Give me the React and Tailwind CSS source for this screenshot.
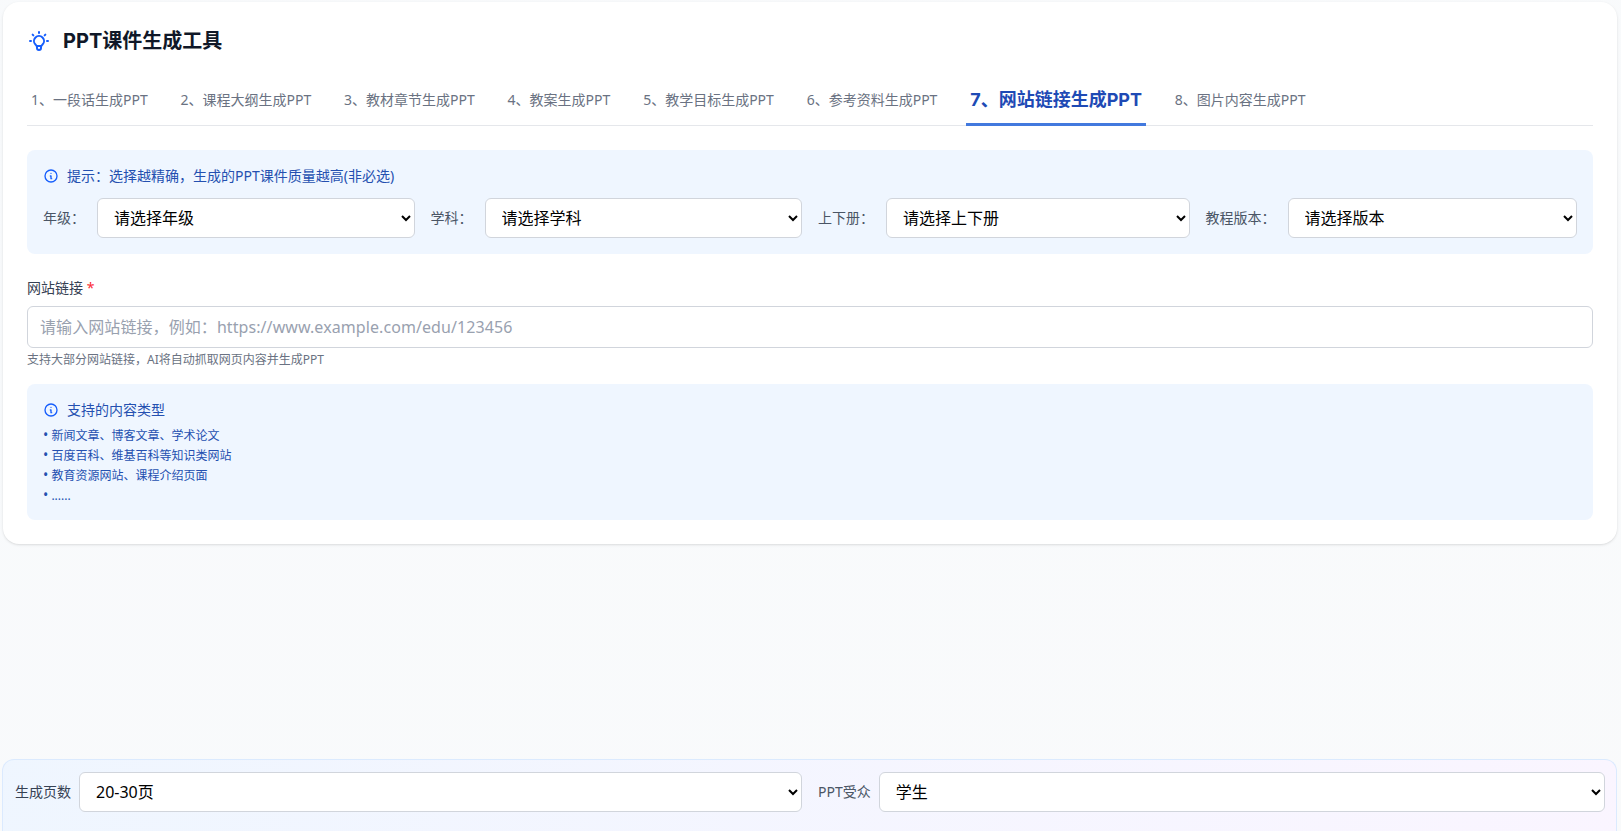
const FONT = "font-['Noto_Sans','Noto_Sans_CJK_SC',sans-serif]";
const BOLD = "font-['Inter','Noto_Sans_CJK_SC',sans-serif]";

function InfoIcon() {
  return (
    <svg className="h-4 w-4 shrink-0 text-blue-600" fill="none" viewBox="0 0 24 24" stroke="currentColor" strokeWidth="2" strokeLinecap="round" strokeLinejoin="round">
      <path d="M13 16h-1v-4h-1m1-4h.01M21 12a9 9 0 11-18 0 9 9 0 0118 0z" />
    </svg>
  );
}

function BulbIcon() {
  return (
    <svg className="h-6 w-6 shrink-0 text-blue-600" fill="none" viewBox="0 0 24 24" stroke="currentColor" strokeWidth="2" strokeLinecap="round" strokeLinejoin="round">
      <path d="M9.663 17h4.673M12 3v1m6.364 1.636l-.707.707M21 12h-1M4 12H3m3.343-5.657l-.707-.707m2.828 9.9a5 5 0 117.072 0l-.548.547A3.374 3.374 0 0014 18.469V19a2 2 0 11-4 0v-.531c0-.895-.356-1.754-.988-2.386l-.548-.547z" />
    </svg>
  );
}

const tabs = [
  "1、一段话生成PPT",
  "2、课程大纲生成PPT",
  "3、教材章节生成PPT",
  "4、教案生成PPT",
  "5、教学目标生成PPT",
  "6、参考资料生成PPT",
  "7、网站链接生成PPT",
  "8、图片内容生成PPT",
];

const filters = [
  ["年级：", "请选择年级"],
  ["学科：", "请选择学科"],
  ["上下册：", "请选择上下册"],
  ["教程版本：", "请选择版本"],
];

const items = ["新闻文章、博客文章、学术论文", "百度百科、维基百科等知识类网站", "教育资源网站、课程介绍页面", "......"];

function Select({ value }) {
  return (
    <select defaultValue={value} className="h-10 min-w-0 flex-1 rounded-md border border-gray-300 bg-white px-3 text-base text-black">
      <option>{value}</option>
    </select>
  );
}

export default function App() {
  return (
    <div className={`${FONT} flex h-[831px] flex-col overflow-hidden bg-gradient-to-br from-slate-50 to-gray-50 pt-[2px] pr-1 pl-[3px]`}>
      <main className="flex-1">
        <div className="rounded-2xl bg-white p-6 shadow-sm">
          <div className="flex h-[30px] items-center gap-3">
            <BulbIcon />
            <h1 className={`${BOLD} text-xl font-bold text-gray-900`}>PPT课件生成工具</h1>
          </div>
          <nav className="mt-[26px] flex h-[44px] gap-[24.8px] border-b border-gray-200">
            {tabs.map((t, i) =>
              i === 6 ? (
                <span key={t} className={`${BOLD} -mb-px flex items-center border-b-[3px] border-[#4279de] px-1 pb-[5px] text-lg font-bold whitespace-nowrap text-[#1e4ab5]`}>{t}</span>
              ) : (
                <span key={t} className="-mb-px flex items-center border-b-[3px] border-transparent px-1 pb-[5px] text-sm whitespace-nowrap text-gray-500">{t}</span>
              )
            )}
          </nav>

          <section className="mt-6 rounded-lg bg-blue-50 p-4">
            <div className="mb-3 flex h-5 items-center gap-2 text-sm text-[#2450b0]">
              <InfoIcon />
              <span>提示：选择越精确，生成的PPT课件质量越高(非必选)</span>
            </div>
            <div className="grid grid-cols-4 gap-4">
              {filters.map(([label, value]) => (
                <div key={label} className="flex items-center gap-3">
                  <label className="text-sm whitespace-nowrap text-gray-600">{label}</label>
                  <Select value={value} />
                </div>
              ))}
            </div>
          </section>

          <section className="mt-6">
            <label className="block h-5 text-sm leading-5 text-gray-700">
              网站链接 <span className="text-red-500">*</span>
            </label>
            <input
              placeholder="请输入网站链接，例如：https://www.example.com/edu/123456"
              className="mt-2 block h-[42px] w-full rounded-md border border-gray-300 px-3 text-base tracking-[0.08px] placeholder:text-gray-400"
            />
            <p className="mt-1 text-xs leading-4 text-gray-500">支持大部分网站链接，AI将自动抓取网页内容并生成PPT</p>
          </section>

          <section className="mt-4 rounded-lg bg-blue-50 p-4 pb-[14px]">
            <div className="mb-1.5 flex h-5 items-center gap-2 text-sm text-[#2450b0]">
              <InfoIcon />
              <span>支持的内容类型</span>
            </div>
            <ul className="text-xs leading-5 text-[#2450b0]">
              {items.map((t) => (
                <li key={t}>
                  <span className="text-sm leading-none">•</span> {t}
                </li>
              ))}
            </ul>
          </section>
        </div>
      </main>

      <footer className="-ml-px h-[72px] shrink-0 rounded-t-xl border border-b-0 border-blue-100 bg-gradient-to-r from-blue-50 to-purple-50 pt-3 pr-[11px] pl-3">
        <div className="grid grid-cols-2 gap-4">
          <div className="flex items-center gap-2">
            <label className="text-sm whitespace-nowrap text-gray-700">生成页数</label>
            <Select value="20-30页" />
          </div>
          <div className="flex items-center gap-2">
            <label className="text-sm whitespace-nowrap text-gray-600">PPT受众</label>
            <Select value="学生" />
          </div>
        </div>
      </footer>
    </div>
  );
}
